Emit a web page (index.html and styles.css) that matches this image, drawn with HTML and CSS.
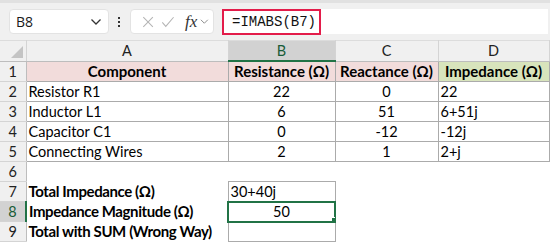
FILE: index.html
```html
<!DOCTYPE html>
<html lang="en">
<head>
    <meta charset="UTF-8">
    <title>Impedance</title>
    <link rel="stylesheet" href="styles.css">
</head>
<body>

<!-- Formula bar -->
<div class="bar">
    <div class="namebox">
        <span>B8</span>
        <svg width="12" height="8" viewBox="0 0 12 8"><path d="M1.5 1.5 L6 6 L10.5 1.5" fill="none" stroke="#333" stroke-width="1.3"/></svg>
    </div>
    <div class="dots"><i></i><i></i><i></i></div>
    <div class="fxbox">
        <svg width="14" height="14" viewBox="0 0 14 14"><path d="M1.5 1.5 L12.5 12.5 M12.5 1.5 L1.5 12.5" stroke="#b4b4b4" stroke-width="1.2"/></svg>
        <svg width="16" height="14" viewBox="0 0 16 14"><path d="M1.5 7.5 L5.5 12 L14.5 1.5" fill="none" stroke="#b4b4b4" stroke-width="1.2"/></svg>
        <span class="fx">fx</span>
        <svg width="10" height="7" viewBox="0 0 10 7"><path d="M1 1.5 L5 5.5 L9 1.5" fill="none" stroke="#888" stroke-width="1.1"/></svg>
    </div>
    <div class="formula">
        <span class="formula-text">=IMABS(B7)</span>
    </div>
</div>

<!-- Sheet -->
<table class="sheet">
    <colgroup>
        <col class="w-rh"><col class="w-a"><col class="w-b"><col class="w-c"><col class="w-d">
    </colgroup>
    <tr class="colhead">
        <th class="corner"><span class="tri"></span></th>
        <th>A</th>
        <th class="sel-col">B</th>
        <th>C</th>
        <th>D</th>
    </tr>
    <tr>
        <th class="rh">1</th>
        <td class="bd hd pink">Component</td>
        <td class="bd hd pink">Resistance (Ω)</td>
        <td class="bd hd pink">Reactance (Ω)</td>
        <td class="bd hd green">Impedance (Ω)</td>
    </tr>
    <tr>
        <th class="rh">2</th>
        <td class="bd">Resistor R1</td>
        <td class="bd num">22</td>
        <td class="bd num">0</td>
        <td class="bd">22</td>
    </tr>
    <tr>
        <th class="rh">3</th>
        <td class="bd">Inductor L1</td>
        <td class="bd num">6</td>
        <td class="bd num">51</td>
        <td class="bd">6+51j</td>
    </tr>
    <tr>
        <th class="rh">4</th>
        <td class="bd">Capacitor C1</td>
        <td class="bd num">0</td>
        <td class="bd num">-12</td>
        <td class="bd">-12j</td>
    </tr>
    <tr>
        <th class="rh">5</th>
        <td class="bd">Connecting Wires</td>
        <td class="bd num">2</td>
        <td class="bd num">1</td>
        <td class="bd">2+j</td>
    </tr>
    <tr>
        <th class="rh">6</th>
        <td></td><td></td><td></td><td></td>
    </tr>
    <tr>
        <th class="rh">7</th>
        <td class="lbl">Total Impedance (Ω)</td>
        <td class="bd">30+40j</td>
        <td></td><td></td>
    </tr>
    <tr>
        <th class="rh sel-row">8</th>
        <td class="lbl">Impedance Magnitude (Ω)</td>
        <td class="bd num active">50</td>
        <td></td><td></td>
    </tr>
    <tr>
        <th class="rh">9</th>
        <td class="lbl">Total with SUM (Wrong Way)</td>
        <td class="bd"></td>
        <td></td><td></td>
    </tr>
</table>

</body>
</html>
```

FILE: styles.css
```css
body {
    margin: 0;
    width: 550px;
    height: 242px;
    overflow: hidden;
    background-color: #fff;
    font-family: Lato, "Liberation Sans", sans-serif;
    color: #000;
}

/* formula bar */
.bar {
    display: flex;
    align-items: center;
    height: 40px;
    padding: 0 2px 0 9px;
    background-color: #f0f0f0;
    border-top: 3px solid #e1e1e1;
    box-sizing: border-box;
}
.namebox {
    display: flex;
    align-items: center;
    justify-content: space-between;
    width: 100px;
    height: 25px;
    padding: 0 6px 0 6px;
    box-sizing: border-box;
    background-color: #fff;
    border: 1px solid #e3e3e3;
    border-radius: 4px;
    font-family: "Open Sans", sans-serif;
    font-size: 14px;
    color: #1a1a1a;
}
.dots {
    display: flex;
    flex-direction: column;
    gap: 2px;
    margin: 0 10px 0 9px;
}
.dots i {
    display: block;
    width: 2px;
    height: 2px;
    background-color: #333;
}
.fxbox {
    display: flex;
    align-items: center;
    gap: 7px;
    width: 84px;
    height: 25px;
    padding: 0 4px 0 11px;
    box-sizing: border-box;
    background-color: #fff;
    border: 1px solid #e3e3e3;
    border-radius: 4px;
}
.fx {
    font-family: "Liberation Serif", serif;
    font-style: italic;
    font-size: 17px;
    color: #333;
    margin-left: 3px;
    margin-right: -4px;
}
.formula {
    flex: 1;
    height: 25px;
    margin-left: 8px;
    background-color: #fff;
    display: flex;
    align-items: center;
}
.formula-text {
    display: flex;
    align-items: center;
    height: 26px;
    padding: 0 3px 0 8px;
    border: 2px solid #e31c4a;
    box-sizing: border-box;
    font-family: "Liberation Mono", monospace;
    font-size: 14px;
    color: #111;
}

/* sheet grid */
.sheet {
    border-collapse: collapse;
    table-layout: fixed;
    width: 549px;
    font-size: 14.5px;
}
.w-rh { width: 26px; }
.w-a { width: 202px; }
.w-b { width: 107px; }
.w-c { width: 103px; }
.w-d { width: 111px; }

.sheet td,
.sheet th {
    height: 19px;
    padding: 0 2px;
    line-height: 19px;
    white-space: nowrap;
    overflow: hidden;
}
.colhead th {
    height: 18px;
    background-color: #f0f0f0;
    font-weight: normal;
    color: #222;
    border-right: 1px solid #d4d4d4;
    border-bottom: 1px solid #bdbdbd;
    border-top: 1px solid #dcdcdc;
}
.corner {
    position: relative;
}
.tri {
    position: absolute;
    right: 3px;
    bottom: 3px;
    width: 0;
    height: 0;
    border-left: 12px solid transparent;
    border-bottom: 12px solid #c4c4c4;
}
.sel-col {
    background-color: #d2d2d2 !important;
    color: #185c37 !important;
    border-bottom: 2px solid #217346 !important;
}
.rh {
    background-color: #f0f0f0;
    font-weight: normal;
    text-align: center;
    color: #222;
    border-right: 1px solid #bdbdbd;
    border-bottom: 1px solid #d4d4d4;
}
.sel-row {
    background-color: #d2d2d2;
    color: #185c37;
    border-right: 2px solid #217346;
}
.bd {
    border: 1px solid #ababab;
}
.hd {
    font-weight: bold;
    font-size: 15px;
    text-align: center;
}
.pink {
    background-color: #f2dcdb;
}
.green {
    background-color: #d8e4bc;
}
.num {
    text-align: center;
}
.lbl {
    font-weight: bold;
    font-size: 15px;
    letter-spacing: -0.4px;
    border-right: 1px solid #ababab;
}
.active {
    position: relative;
    outline: 2px solid #217346;
    outline-offset: -1px;
}
.active::after {
    content: "";
    position: absolute;
    right: -3px;
    bottom: -3px;
    width: 5px;
    height: 5px;
    background-color: #217346;
    border: 1px solid #fff;
}
```
